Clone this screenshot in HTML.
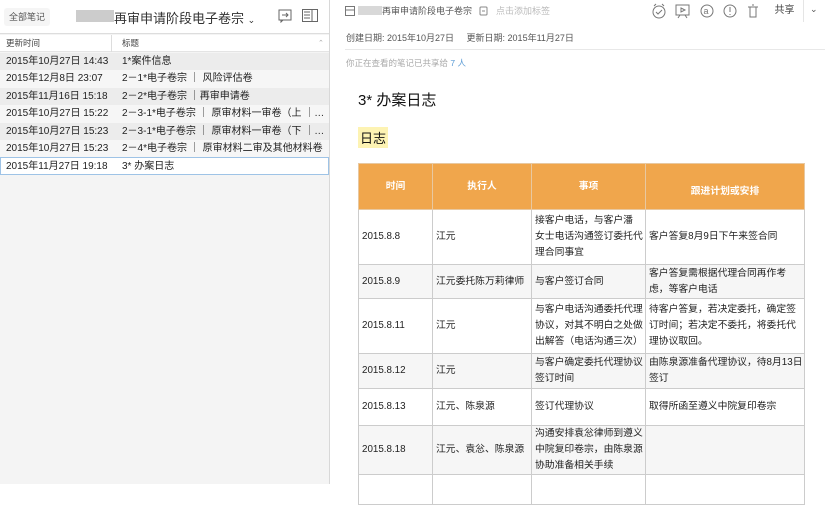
<!DOCTYPE html>
<html><head><meta charset="utf-8"><style>
*{margin:0;padding:0;box-sizing:border-box}
body{width:832px;height:484px;overflow:hidden;background:#fff;font-family:"Liberation Sans","Noto Sans CJK SC",sans-serif;color:#222;position:relative}
.abs{position:absolute}
#left{left:0;top:0;width:330px;height:484px;background:#f4f4f4;border-right:1px solid #d8d8d8}
#top{left:0;top:0;width:329px;height:34px;background:#fff;border-bottom:1px solid #ddd}
.row{position:absolute;left:0;width:329px;height:17.4px;font-size:10px;line-height:17px}
.row span{position:absolute}
.row .d{left:6px}.row .t{left:122px}
td,th{border:1px solid #ccc;font-size:9.8px;vertical-align:middle;padding:0 3px;line-height:16px;white-space:nowrap;overflow:hidden}
th{background:#f0a64c;color:#fff;font-weight:bold;text-align:center;border-color:#e8c8a0}
table{border-collapse:collapse;position:absolute;left:358px;top:163px;width:447px;table-layout:fixed}
tr.g td{background:#f6f6f6}
svg{position:absolute}
</style></head><body>
<div id="left" class="abs"></div>
<div id="top" class="abs">
 <div class="abs" style="left:4px;top:8px;width:46px;height:18px;background:#f5f5f5;border-radius:3px;font-size:9px;color:#555;line-height:18px;text-align:center">全部笔记</div>
 <div class="abs" style="left:76px;top:10px;width:38px;height:12px;background:#ccc"></div>
 <div class="abs" style="left:114px;top:8px;font-size:13px;color:#333">再审申请阶段电子卷宗 <span style="font-size:9px">⌄</span></div>
 <svg style="left:278px;top:9px" width="14" height="14" viewBox="0 0 14 14"><rect x="1" y="1" width="12" height="10" fill="none" stroke="#666"/><path d="M4 6h6M8 4l2 2-2 2M3 11v2l2-2" fill="none" stroke="#666"/></svg>
 <svg style="left:302px;top:9px" width="16" height="14" viewBox="0 0 16 14"><rect x="0.5" y="0.5" width="15" height="12" fill="none" stroke="#666"/><path d="M10 1v11M2 3h6M2 6h6M2 9h6" stroke="#666"/></svg>
</div>
<div class="abs" style="left:0;top:35px;width:329px;height:17px;background:#fff;border-bottom:1px solid #e4e4e4;font-size:8.5px;color:#444;line-height:17px">
 <span class="abs" style="left:6px">更新时间</span><span class="abs" style="left:111px;top:0;width:1px;height:17px;background:#ddd"></span><span class="abs" style="left:122px">标题</span><span class="abs" style="left:318px;color:#aaa;font-size:7px">⌃</span></div>
<div class="row" style="top:53px;background:#ececec"><span class="d">2015年10月27日 14:43</span><span class="t">1*案件信息</span></div>
<div class="row" style="top:70.4px;background:#f6f6f6"><span class="d">2015年12月8日 23:07</span><span class="t">2－1*电子卷宗 ｜ 风险评估卷</span></div>
<div class="row" style="top:87.8px;background:#ececec"><span class="d">2015年11月16日 15:18</span><span class="t">2－2*电子卷宗 ｜再审申请卷</span></div>
<div class="row" style="top:105.2px;background:#f6f6f6"><span class="d">2015年10月27日 15:22</span><span class="t">2－3-1*电子卷宗 ｜ 原审材料一审卷（上 ｜…</span></div>
<div class="row" style="top:122.6px;background:#ececec"><span class="d">2015年10月27日 15:23</span><span class="t">2－3-1*电子卷宗 ｜ 原审材料一审卷（下 ｜…</span></div>
<div class="row" style="top:140px;background:#f6f6f6"><span class="d">2015年10月27日 15:23</span><span class="t">2－4*电子卷宗 ｜ 原审材料二审及其他材料卷</span></div>
<div class="row" style="top:157.4px;background:#fff;border:1px solid #9ec3e6"><span class="d" style="left:5px">2015年11月27日 19:18</span><span class="t" style="left:121px">3* 办案日志</span></div>

<svg style="left:345px;top:6px" width="10" height="10" viewBox="0 0 10 10"><rect x="0.5" y="0.5" width="9" height="9" fill="none" stroke="#777"/><path d="M0.5 4h9" stroke="#777"/></svg>
<div class="abs" style="left:358px;top:6px;width:24px;height:9px;background:#d8d8d8"></div>
<div class="abs" style="left:382px;top:4px;font-size:9px;color:#555">再审申请阶段电子卷宗</div>
<svg style="left:479px;top:5px" width="9" height="11" viewBox="0 0 9 11"><rect x="1" y="2" width="7" height="8" rx="1" fill="none" stroke="#888"/><path d="M3 6h3" stroke="#888"/></svg>
<div class="abs" style="left:496px;top:4px;font-size:9px;color:#bbb">点击添加标签</div>
<svg style="left:651px;top:3px" width="130" height="16" viewBox="0 0 130 16" fill="none" stroke="#777">
<circle cx="8" cy="9" r="6"/><path d="M5 9l2 2 4-4M3 3l2-2M13 3l-2-2"/>
<rect x="25" y="2" width="13" height="10"/><path d="M30 5l4 2-4 2z M29 12l-2 3M34 12l2 3"/>
<circle cx="56" cy="8" r="6"/><text x="52.5" y="11" font-size="9" fill="#777" stroke="none" font-family="Liberation Sans">a</text>
<circle cx="79" cy="8" r="6"/><path d="M79 4v5M79 11v1"/>
<path d="M97 4h10M99 4v10h6V4M101 2h2"/>
</svg>
<div class="abs" style="left:766px;top:0;width:38px;height:22px;border-right:1px solid #e5e5e5;font-size:10px;color:#444;line-height:22px;text-align:center;background:#fff">共享</div>
<div class="abs" style="left:810px;top:4px;font-size:9px;color:#555">⌄</div>
<div class="abs" style="left:346px;top:31px;font-size:9px;color:#555">创建日期: 2015年10月27日 &nbsp;&nbsp;&nbsp; 更新日期: 2015年11月27日</div>
<div class="abs" style="left:345px;top:49px;width:480px;height:1px;background:#e8e8e8"></div>
<div class="abs" style="left:346px;top:57px;font-size:8.5px;color:#aaa">你正在查看的笔记已共享给 <span style="color:#5b9bd5">7 人</span></div>
<div class="abs" style="left:358px;top:89px;font-size:15px;color:#111">3* 办案日志</div>
<div class="abs" style="left:358px;top:127px;font-size:13px;color:#111;background:#fdf3b3;padding:1px 2px">日志</div>
<table>
<colgroup><col style="width:74px"><col style="width:99px"><col style="width:114px"><col></colgroup>
<tr style="height:46px"><th>时间</th><th>执行人</th><th>事项</th><th style="padding-top:10px">跟进计划或安排</th></tr>
<tr style="height:55px"><td>2015.8.8</td><td>江元</td><td>接客户电话，与客户潘<br>女士电话沟通签订委托代<br>理合同事宜</td><td>客户答复8月9日下午来签合同</td></tr>
<tr class="g" style="height:34px"><td>2015.8.9</td><td>江元委托陈万莉律师</td><td>与客户签订合同</td><td>客户答复需根据代理合同再作考<br>虑，等客户电话</td></tr>
<tr style="height:55px"><td>2015.8.11</td><td>江元</td><td>与客户电话沟通委托代理<br>协议，对其不明白之处做<br>出解答（电话沟通三次）</td><td>待客户答复，若决定委托，确定签<br>订时间；若决定不委托，将委托代<br>理协议取回。</td></tr>
<tr class="g" style="height:35px"><td>2015.8.12</td><td>江元</td><td>与客户确定委托代理协议<br>签订时间</td><td>由陈泉源准备代理协议，待8月13日<br>签订</td></tr>
<tr style="height:37px"><td>2015.8.13</td><td>江元、陈泉源</td><td>签订代理协议</td><td>取得所函至遵义中院复印卷宗</td></tr>
<tr class="g" style="height:48px"><td>2015.8.18</td><td>江元、袁忩、陈泉源</td><td>沟通安排袁忩律师到遵义<br>中院复印卷宗，由陈泉源<br>协助准备相关手续</td><td></td></tr>
<tr style="height:30px"><td></td><td></td><td></td><td></td></tr>
</table>
</body></html>
